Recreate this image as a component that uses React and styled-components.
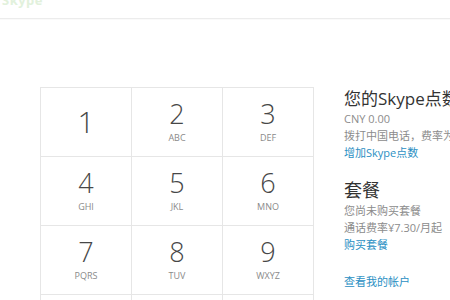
import React from "react";
import styled, { createGlobalStyle } from "styled-components";

const Global = createGlobalStyle`
  html, body { margin: 0; padding: 0; background: #fff; }
  body { font-family: "Open Sans", "Noto Sans CJK SC", sans-serif; overflow: hidden; }
`;

const Page = styled.div`
  width: 450px;
  height: 300px;
  overflow: hidden;
  background: #fff;
`;

const Header = styled.header`
  height: 18px;
  border-bottom: 1px solid #ececec;
  box-shadow: 0 1px 1px rgba(0,0,0,0.02);
  overflow: hidden;
  display: flex;
  align-items: flex-start;
`;

const Logo = styled.div`
  margin-top: -9px;
  padding-left: 2px;
  font-family: "Open Sans", sans-serif;
  font-size: 13px;
  font-weight: 700;
  color: #e2f1dc;
  letter-spacing: 0.5px;
`;

const Main = styled.main`
  display: flex;
  align-items: flex-start;
  gap: 30px;
  padding: 68px 0 0 40px;
`;

const Keypad = styled.div`
  display: grid;
  grid-template-columns: repeat(3, 91px);
  grid-auto-rows: 69px;
  border-top: 1px solid #e6e6e6;
  border-left: 1px solid #e6e6e6;
  flex-shrink: 0;
`;

const Key = styled.div`
  border-right: 1px solid #e6e6e6;
  border-bottom: 1px solid #e6e6e6;
  display: flex;
  flex-direction: column;
  align-items: center;
  justify-content: ${(p) => (p.$solo ? "center" : "flex-start")};
  padding-top: ${(p) => (p.$solo ? "0" : "10px")};
  box-sizing: border-box;
`;

const Digit = styled.span`
  font-family: "Open Sans", sans-serif;
  font-weight: 300;
  font-size: ${(p) => (p.$solo ? "30px" : "27px")};
  line-height: 32px;
  color: #474747;
`;

const Letters = styled.span`
  font-family: "Open Sans", sans-serif;
  font-size: 9px;
  line-height: 12px;
  margin-top: 2px;
  color: #8a8a8a;
`;

const Side = styled.aside`
  margin-top: 1px;
  display: flex;
  flex-direction: column;
  white-space: nowrap;
`;

const Heading = styled.h2`
  margin: ${(p) => p.$mt || 0}px 0 0;
  font-weight: 400;
  font-size: ${(p) => p.$size}px;
  line-height: ${(p) => p.$lh}px;
  color: #333;
`;

const Line = styled.div`
  font-size: 11px;
  line-height: 17px;
  color: #8c8c8c;
`;

const Link = styled.a`
  display: block;
  font-size: 11px;
  line-height: 17px;
  color: #2b8fc3;
  text-decoration: none;
  margin-top: ${(p) => p.$mt || 0}px;
`;

const keys = [
  ["1", ""],
  ["2", "ABC"],
  ["3", "DEF"],
  ["4", "GHI"],
  ["5", "JKL"],
  ["6", "MNO"],
  ["7", "PQRS"],
  ["8", "TUV"],
  ["9", "WXYZ"],
  ["*", ""],
  ["0", "+"],
  ["#", ""],
];

export default function App() {
  return (
    <Page>
      <Global />
      <Header>
        <Logo>Skype</Logo>
      </Header>
      <Main>
        <Keypad>
          {keys.map(([d, l]) => (
            <Key key={d} $solo={!l}>
              <Digit $solo={d === "1"}>{d}</Digit>
              {l && <Letters>{l}</Letters>}
            </Key>
          ))}
        </Keypad>
        <Side>
          <Heading $size={17} $lh={22}>您的Skype点数</Heading>
          <Line>CNY 0.00</Line>
          <Line>拨打中国电话，费率为</Line>
          <Link href="#">增加Skype点数</Link>
          <Heading $size={18} $lh={24} $mt={17}>套餐</Heading>
          <Line>您尚未购买套餐</Line>
          <Line>通话费率¥7.30/月起</Line>
          <Link href="#">购买套餐</Link>
          <Link href="#" $mt={20}>查看我的帐户</Link>
        </Side>
      </Main>
    </Page>
  );
}
